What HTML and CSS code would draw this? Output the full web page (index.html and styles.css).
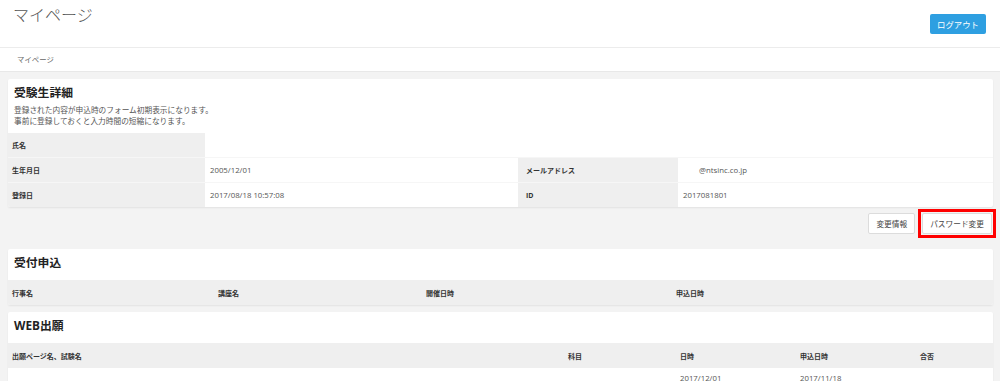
FILE: index.html
```html
<!DOCTYPE html>
<html lang="ja">
<head>
    <meta charset="UTF-8">
    <meta name="viewport" content="width=device-width, initial-scale=1.0">
    <title>マイページ</title>
    <link rel="stylesheet" href="styles.css">
</head>
<body>
    <!-- Header -->
    <header class="topbar">
        <h1>マイページ</h1>
        <button class="btn-logout">ログアウト</button>
    </header>

    <div class="breadcrumb">マイページ</div>

    <div id="main">
        <!-- 受験生詳細 -->
        <section class="card">
            <div class="card-head">
                <h2>受験生詳細</h2>
                <p>登録された内容が申込時のフォーム初期表示になります。<br>事前に登録しておくと入力時間の短縮になります。</p>
            </div>
            <table class="detail">
                <colgroup>
                    <col style="width:197px">
                    <col style="width:313px">
                    <col style="width:160px">
                    <col>
                </colgroup>
                <tr>
                    <th>氏名</th>
                    <td colspan="3"></td>
                </tr>
                <tr>
                    <th>生年月日</th>
                    <td>2005/12/01</td>
                    <th class="th-wide">メールアドレス</th>
                    <td><span class="mask"></span>@ntsinc.co.jp</td>
                </tr>
                <tr>
                    <th>登録日</th>
                    <td>2017/08/18 10:57:08</td>
                    <th class="th-wide">ID</th>
                    <td>2017081801</td>
                </tr>
            </table>
        </section>

        <div class="actions">
            <button class="btn">変更情報</button>
            <span class="marker"><button class="btn">パスワード変更</button></span>
        </div>

        <!-- 受付申込 -->
        <section class="card">
            <div class="card-head card-head-list">
                <h2>受付申込</h2>
            </div>
            <table class="list">
                <colgroup>
                    <col style="width:206px">
                    <col style="width:208px">
                    <col style="width:250px">
                    <col>
                </colgroup>
                <tr>
                    <th>行事名</th>
                    <th>講座名</th>
                    <th>開催日時</th>
                    <th>申込日時</th>
                </tr>
            </table>
        </section>

        <!-- WEB出願 -->
        <section class="card">
            <div class="card-head card-head-list">
                <h2>WEB出願</h2>
            </div>
            <table class="list">
                <colgroup>
                    <col style="width:556px">
                    <col style="width:112px">
                    <col style="width:120px">
                    <col style="width:120px">
                    <col>
                </colgroup>
                <tr>
                    <th>出願ページ名、試験名</th>
                    <th>科目</th>
                    <th>日時</th>
                    <th>申込日時</th>
                    <th>合否</th>
                </tr>
                <tr>
                    <td></td>
                    <td></td>
                    <td>2017/12/01</td>
                    <td>2017/11/18</td>
                    <td></td>
                </tr>
            </table>
        </section>
    </div>
</body>
</html>
```

FILE: styles.css
```css
body {
    font-family: "Open Sans", "Noto Sans CJK JP", sans-serif;
    margin: 0;
    padding: 0;
    background-color: #f3f3f3;
    color: #333;
}

.topbar {
    display: flex;
    justify-content: space-between;
    align-items: flex-start;
    height: 47px;
    padding: 0 14px 0 13px;
    background-color: #fff;
    border-bottom: 1px solid #ececec;
}

.topbar h1 {
    margin: 0;
    padding-top: 4px;
    font-size: 16px;
    line-height: 22px;
    font-weight: 300;
    color: #555;
}

.btn-logout {
    margin-top: 14px;
    width: 56px;
    height: 20px;
    padding: 0;
    background-color: #2e9fe1;
    color: #fff;
    border: none;
    border-radius: 2px;
    font-family: inherit;
    font-size: 8.4px;
    cursor: pointer;
}

.breadcrumb {
    height: 23px;
    line-height: 23px;
    padding-left: 17px;
    background-color: #fff;
    border-bottom: 1px solid #e8e8e8;
    font-size: 7.4px;
    color: #666;
}

#main {
    padding: 7px 7px 0 8px;
}

.card {
    background-color: #fff;
    border-radius: 2px;
    box-shadow: 0 1px 2px rgba(0, 0, 0, 0.07);
    margin-bottom: 7px;
    overflow: hidden;
}

.card-head {
    padding: 5px 6px 9px;
}

.card-head-list {
    padding-bottom: 10px;
}

.card-head h2 {
    margin: 0;
    font-size: 11.8px;
    line-height: 16px;
    font-weight: bold;
    color: #222;
}

.card-head p {
    margin: 5px 0 -3px;
    font-size: 7.7px;
    line-height: 11px;
    color: #555;
}

table {
    width: 100%;
    border-collapse: collapse;
    table-layout: fixed;
}

th {
    text-align: left;
    font-size: 7px;
    font-weight: bold;
    color: #333;
}

td {
    font-size: 7.8px;
    color: #555;
}

.detail th,
.detail td {
    height: 24px;
    padding: 0 5px;
    border-bottom: 1px solid #f6f6f6;
}

.detail tr:last-child th,
.detail tr:last-child td {
    border-bottom: none;
}

.detail th {
    background-color: #efefef;
    padding-left: 4px;
}

.detail .th-wide {
    padding-left: 8px;
}

.mask {
    display: inline-block;
    width: 16px;
}

.list th {
    height: 25px;
    padding: 0 4px;
    background-color: #efefef;
}

.list td {
    height: 25px;
    padding: 0 4px;
    vertical-align: top;
    padding-top: 5px;
}

.actions {
    display: flex;
    justify-content: flex-end;
    align-items: center;
    gap: 3px;
    margin: -5px -3px 0 0;
    padding-bottom: 11px;
}

.btn {
    height: 21px;
    padding: 0 7px;
    background-color: #fff;
    border: 1px solid #dcdcdc;
    border-radius: 2px;
    font-family: inherit;
    font-size: 7.7px;
    color: #444;
    cursor: pointer;
}

.marker {
    display: flex;
    padding: 1px;
    border: 3px solid #f00;
}
```
